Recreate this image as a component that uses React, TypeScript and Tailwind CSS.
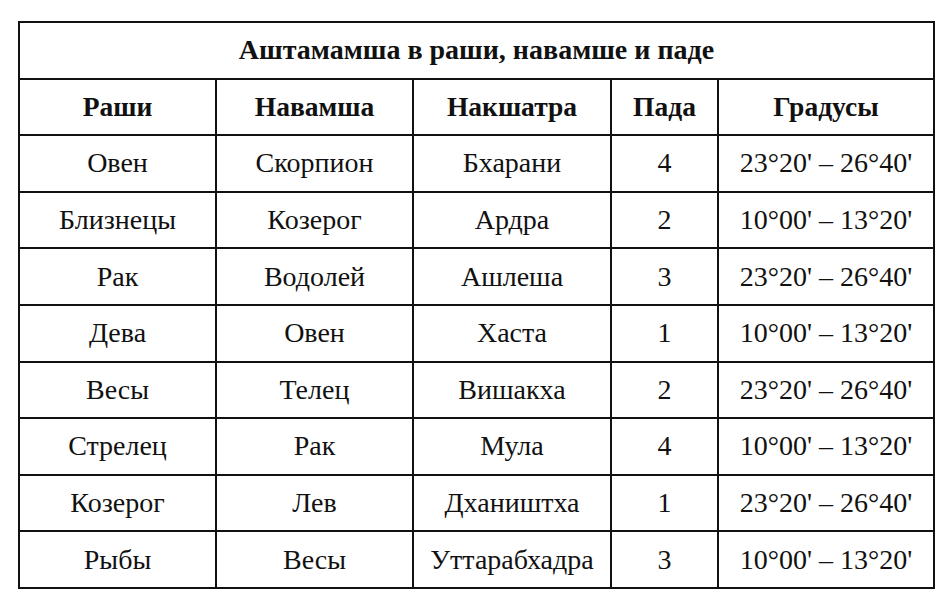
import React from 'react';

type Row = [string, string, string, string, string];

const rows: Row[] = [
  ['Овен', 'Скорпион', 'Бхарани', '4', "23°20' – 26°40'"],
  ['Близнецы', 'Козерог', 'Ардра', '2', "10°00' – 13°20'"],
  ['Рак', 'Водолей', 'Ашлеша', '3', "23°20' – 26°40'"],
  ['Дева', 'Овен', 'Хаста', '1', "10°00' – 13°20'"],
  ['Весы', 'Телец', 'Вишакха', '2', "23°20' – 26°40'"],
  ['Стрелец', 'Рак', 'Мула', '4', "10°00' – 13°20'"],
  ['Козерог', 'Лев', 'Дхаништха', '1', "23°20' – 26°40'"],
  ['Рыбы', 'Весы', 'Уттарабхадра', '3', "10°00' – 13°20'"],
];

const headers = ['Раши', 'Навамша', 'Накшатра', 'Пада', 'Градусы'];

const cell = 'border-2 border-[#111] text-center align-middle p-0';

const App: React.FC = () => {
  return (
    <div className="w-[950px] h-[610px] bg-white pt-[21px] pl-[18px] text-[#111] font-['Liberation_Serif',serif] text-[28px] leading-none">
      <table className="table-fixed border-collapse w-[915px]">
        <colgroup>
          <col className="w-[197px]" />
          <col className="w-[197px]" />
          <col className="w-[198px]" />
          <col className="w-[107px]" />
          <col className="w-[216px]" />
        </colgroup>
        <tbody>
          {/* Title */}
          <tr className="h-[56.6px]">
            <td colSpan={5} className={`${cell} font-bold text-[28px]`}>
              Аштамамша в раши, навамше и паде
            </td>
          </tr>
          {/* Column headers */}
          <tr className="h-[56.6px]">
            {headers.map((h) => (
              <td key={h} className={`${cell} font-bold text-[27.5px]`}>{h}</td>
            ))}
          </tr>
          {rows.map((r, i) => (
            <tr key={i} className="h-[56.6px]">
              {r.map((c, j) => (
                <td key={j} className={cell}>{c}</td>
              ))}
            </tr>
          ))}
        </tbody>
      </table>
    </div>
  );
};

export default App;
